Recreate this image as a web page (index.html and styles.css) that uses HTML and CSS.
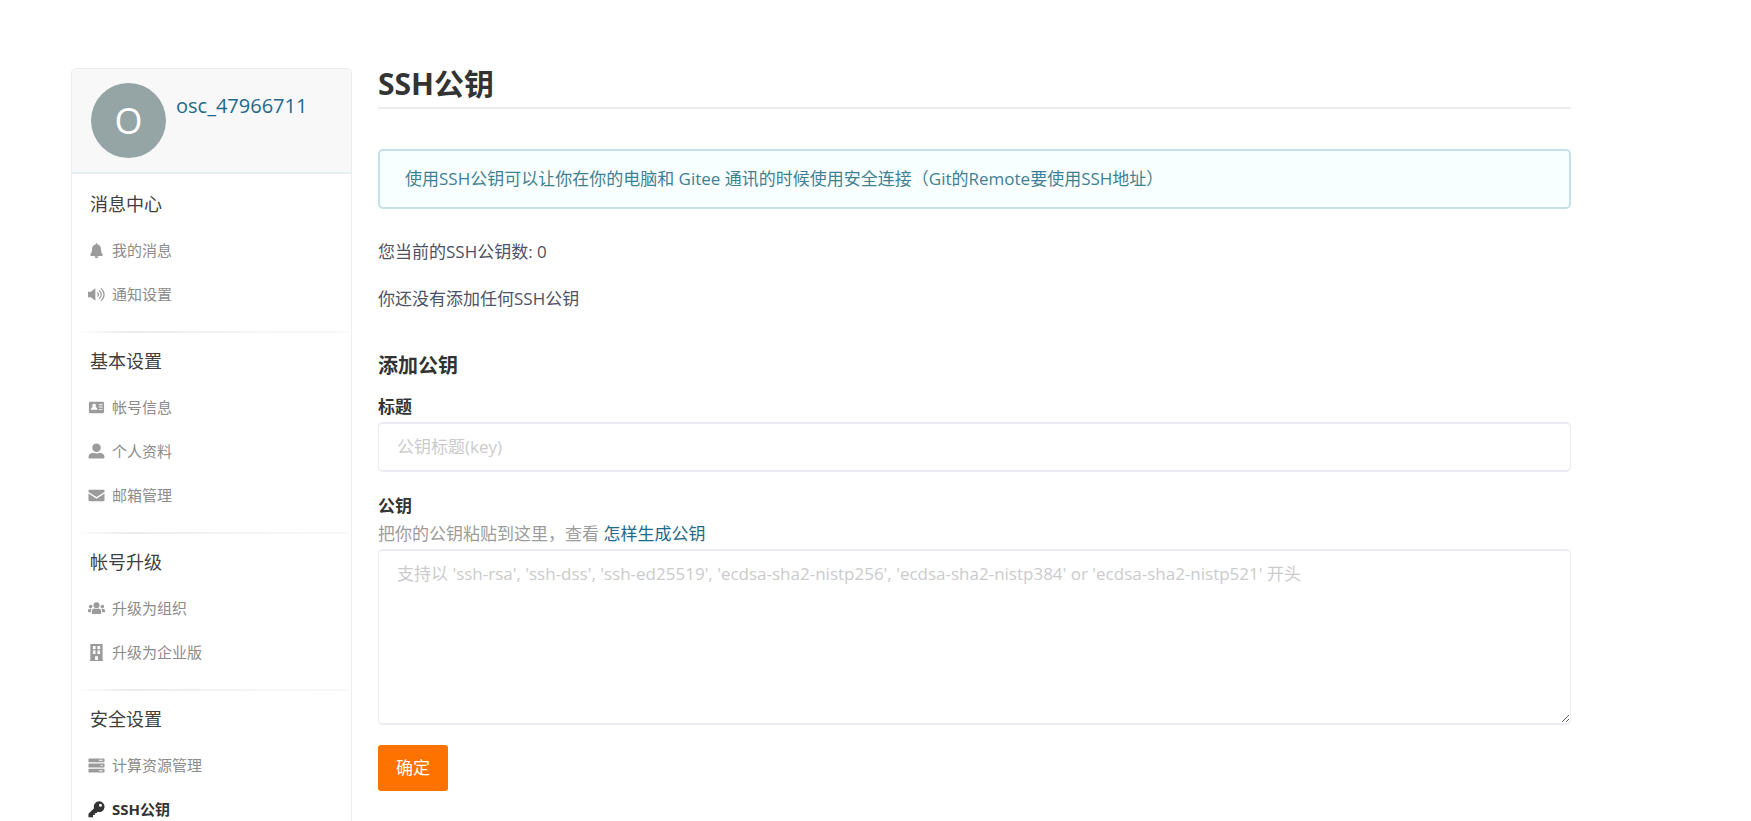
FILE: index.html
```html
<!DOCTYPE html>
<html lang="zh-CN">
<head>
<meta charset="utf-8">
<title>SSH公钥</title>
<link rel="stylesheet" href="styles.css">
</head>
<body>
<div class="page">
  <aside class="sidebar">
    <header class="profile">
      <span class="avatar">O</span>
      <a class="username" href="#">osc_47966711</a>
    </header>
    <nav class="menu">
      <section class="group">
        <h2 class="group-title">消息中心</h2>
        <a class="item" href="#"><svg class="icon" viewBox="0 0 18 18"><path d="M9 1.2c.6 0 1 .5 1 1v.5c2.300.5 3.800 2.400 3.800 4.800 0 3 .6 4.400 1.500 5.300.7.700.2 1.900-.7 1.900H3.400c-.9 0-1.400-1.200-.7-1.900.9-.9 1.500-2.300 1.500-5.300 0-2.400 1.500-4.300 3.800-4.800v-.5c0-.5.4-1 1-1zM7 15.200h4a2 2 0 0 1-4 0z"/></svg>我的消息</a>
        <a class="item" href="#"><svg class="icon" viewBox="0 0 18 18"><path d="M0 6.200h3L7.800 2.500v13L3 11.800H0z"/><path class="line" d="M10 7c1.400 1 1.400 3 0 4M11.800 4.800c3 2.200 3 6.200 0 8.400M13.600 2.500c4.500 3.500 4.500 9.500 0 13"/></svg>通知设置</a>
      </section>
      <section class="group">
        <h2 class="group-title">基本设置</h2>
        <a class="item" href="#"><svg class="icon" viewBox="0 0 18 18"><path fill-rule="evenodd" d="M2.500 3h13c.8 0 1.500.6 1.500 1.400v9.200c0 .8-.7 1.400-1.500 1.400h-13C1.700 15 1 14.400 1 13.600V4.400C1 3.600 1.700 3 2.500 3zM6.500 5a2 2 0 0 0-1.200 3.600C3.800 9 3 9.800 3 11.500h7c0-1.700-.8-2.500-2.300-2.900A2 2 0 0 0 6.500 5zM11.500 5.500v1h4v-1zM11.500 8v1h4V8zM11.500 10.500v1h4v-1z"/></svg>帐号信息</a>
        <a class="item" href="#"><svg class="icon" viewBox="0 0 18 18"><circle cx="9" cy="5" r="4.500"/><path d="M0.500 14.800c0-2.500 1.500-4 5-4.500 2.200 1 4.800 1 7 0 3.500.5 5 2 5 4.500 0 .8-.5 1.700-1.300 1.700H1.800C1 16.500.5 15.600.5 14.800z"/></svg>个人资料</a>
        <a class="item" href="#"><svg class="icon" viewBox="0 0 18 18"><path d="M1.700 3h14.600c.8 0 1.200.5 1.200 1.200v1L9 10.700.5 5.200v-1C.5 3.500.9 3 1.700 3zM.5 7L9 12.500 17.500 7v6.800c0 .7-.4 1.200-1.200 1.200H1.700c-.8 0-1.200-.5-1.200-1.200z"/></svg>邮箱管理</a>
      </section>
      <section class="group">
        <h2 class="group-title">帐号升级</h2>
        <a class="item" href="#"><svg class="icon" viewBox="0 0 18 18"><circle cx="9" cy="5.500" r="3.200"/><circle cx="2.800" cy="7" r="1.900"/><circle cx="15.200" cy="7" r="1.900"/><path d="M4 14v-2c0-1.800 1.200-2.800 2.800-3 1.400.7 3 .7 4.400 0 1.600.2 2.800 1.200 2.800 3v2c0 .4-.3.700-.7.700H4.700c-.4 0-.7-.3-.7-.7zM0 12.800V11.200c0-1 .7-1.700 1.700-1.700h2C3.200 10.200 3 11.400 3.100 13H.4zM18 12.800v-1.600c0-1-.7-1.700-1.700-1.700h-2c.5.7.7 1.900.6 3.500h2.700z"/></svg>升级为组织</a>
        <a class="item" href="#"><svg class="icon" viewBox="0 0 18 18"><path fill-rule="evenodd" d="M2.500 0h13v17h.5v1H2v-1h.5zM5.200 2v3.500h2.800V2zM10 2v3.500h2.800V2zM5.200 7v3.500h2.800V7zM10 7v3.500h2.800V7zM7.500 13v4h3v-4z"/></svg>升级为企业版</a>
      </section>
      <section class="group">
        <h2 class="group-title">安全设置</h2>
        <a class="item" href="#"><svg class="icon" viewBox="0 0 18 18"><path fill-rule="evenodd" d="M1 1.500h16l.5.500v3l-.5.500H1L.5 5V2zM11.500 3v1h4V3zM1 7h16l.5.500v3l-.5.500H1l-.5-.5v-3zM13.500 8.500v1h2v-1zM1 12.500h16l.5.500v3l-.5.500H1l-.5-.5v-3zM11.500 14v1h4v-1z"/></svg>计算资源管理</a>
        <a class="item active" href="#" aria-current="page"><svg class="icon" viewBox="0 0 18 18"><path fill-rule="evenodd" d="M11.900.3a5.700 5.700 0 1 1-1.600 11.200L8.900 12.900H7.200v1.900H5.300V17.300H.5v-3.700l5.900-5.900A5.700 5.700 0 0 1 11.900.3zM13.200 3a1.600 1.600 0 1 0 0 3.200 1.600 1.600 0 0 0 0-3.200z"/></svg>SSH公钥</a>
      </section>
    </nav>
  </aside>
  <main class="content">
    <h1 class="title">SSH公钥</h1>
    <p class="notice">使用SSH公钥可以让你在你的电脑和 Gitee 通讯的时候使用安全连接（Git的Remote要使用SSH地址）</p>
    <p class="text">您当前的SSH公钥数: 0</p>
    <p class="text">你还没有添加任何SSH公钥</p>
    <form class="form">
      <h2 class="form-title">添加公钥</h2>
      <label class="label" for="key-title">标题</label>
      <input class="field" id="key-title" type="text" placeholder="公钥标题(key)">
      <label class="label label-key" for="key-body">公钥</label>
      <p class="help">把你的公钥粘贴到这里，查看 <a class="link" href="#">怎样生成公钥</a></p>
      <textarea class="field area" id="key-body" placeholder="支持以 'ssh-rsa', 'ssh-dss', 'ssh-ed25519', 'ecdsa-sha2-nistp256', 'ecdsa-sha2-nistp384' or 'ecdsa-sha2-nistp521' 开头"></textarea>
      <button class="submit" type="button">确定</button>
    </form>
  </main>
</div>
</body>
</html>
```
FILE: styles.css
```css
* {
  box-sizing: border-box;
}

html {
  overflow: hidden;
}

body {
  margin: 0;
  height: 100vh;
  overflow: hidden;
  background: #fff;
  color: #4c5266;
  font-family: "Open Sans", "Noto Sans CJK SC", sans-serif;
  font-size: 17px;
  line-height: 24px;
}

h1, h2, p {
  margin: 0;
}

a {
  color: inherit;
  text-decoration: none;
}

.page {
  display: flex;
  align-items: flex-start;
  gap: 26px;
  padding: 68px 180px 0 71px;
}

.sidebar {
  flex: 0 0 281px;
  border: 1px solid #e8eef2;
  border-radius: 5px;
}

.profile {
  display: flex;
  gap: 10px;
  padding: 14px 19px;
  border-bottom: 2px solid #e8eff3;
  border-radius: 5px 5px 0 0;
  background: #f8f8f8;
}

.avatar {
  width: 75px;
  height: 75px;
  border-radius: 50%;
  background: #95a5a6;
  color: #fff;
  font-size: 36px;
  font-weight: 500;
  line-height: 75px;
  text-align: center;
}

.username {
  padding-top: 8px;
  color: #1f6a8a;
  font-size: 20px;
  line-height: 30px;
}

.menu {
  padding: 0 2px 12px;
}

.group {
  padding: 18px 0 15px;
}

.group + .group {
  padding-top: 16px;
  border-top: 2px solid;
  border-image: linear-gradient(90deg, #fff, #ececec 20%, #f4f4f4 60%, #f9f9f9) 1;
}

.group-title {
  padding: 0 16px 12px;
  color: #404040;
  font-size: 18px;
  font-weight: 400;
  line-height: 24px;
}

.item {
  display: flex;
  align-items: center;
  gap: 7px;
  padding: 0 14px;
  color: #8c8c8c;
  font-size: 15px;
  line-height: 44px;
}

.icon {
  width: 17px;
  height: 17px;
  fill: #9b9b9b;
}

.line {
  fill: none;
  stroke: #9b9b9b;
  stroke-width: 1.3;
}

.active {
  color: #333;
  font-weight: 700;
}

.active .icon {
  fill: #333;
}

.content {
  flex: 1;
  min-width: 0;
}

.title {
  padding-bottom: 7px;
  border-bottom: 2px solid #ececec;
  color: #333;
  font-size: 30px;
  line-height: 32px;
}

.notice {
  margin: 40px 0 31px;
  padding: 16px 25px;
  border: 2px solid #c5e0e8;
  border-radius: 5px;
  background: #f8ffff;
  color: #3f7f93;
}

.text {
  margin-bottom: 23px;
}

.form {
  display: flex;
  flex-direction: column;
  align-items: stretch;
  padding-top: 17px;
}

.form-title {
  margin-bottom: 14px;
  color: #333;
  font-size: 20px;
  line-height: 30px;
}

.label {
  margin-bottom: 3px;
  color: #333;
  font-weight: 700;
}

.label-key {
  margin: 22px 0 4px;
}

.help {
  margin-bottom: 3px;
  color: #9c9c9c;
}

.link {
  color: #1f6a8a;
}

.field {
  width: 100%;
  padding: 11px 18px;
  border: solid #ebecf3;
  border-width: 2px 1px;
  border-radius: 5px;
  background: #fff;
  color: #4c5266;
  font: inherit;
}

.field::placeholder {
  color: #cbcbcd;
}

.area {
  height: 176px;
  resize: vertical;
}

.submit {
  align-self: flex-start;
  margin-top: 20px;
  padding: 11px 18px;
  border: 0;
  border-radius: 3px;
  background: #fe7300;
  color: #fff;
  font: inherit;
}
```
